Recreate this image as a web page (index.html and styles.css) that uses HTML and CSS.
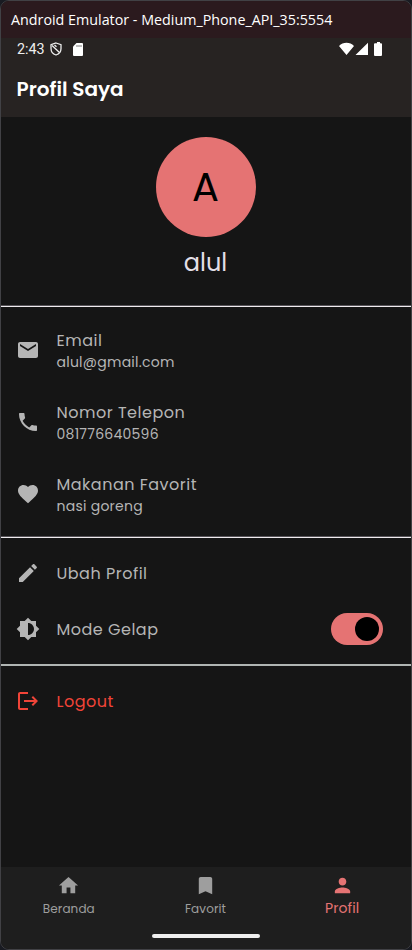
FILE: index.html
```html
<!DOCTYPE html>
<html lang="id">
<head>
<meta charset="utf-8">
<title>Profil Saya</title>
<link rel="stylesheet" href="styles.css">
</head>
<body>
<div class="window">
  <div class="titlebar">Android Emulator - Medium_Phone_API_35:5554</div>
  <header class="appbar">
    <div class="status">
      <span class="clock">2:43</span>
      <svg class="shield" viewBox="0 0 12 14"><path d="M6 1 11 2.600V6.500C11 9.500 9 12 6 13 3 12 1 9.500 1 6.500V2.600Z" fill="none" stroke="#eee" stroke-width="1.300"/><path d="M2 3.500 9.500 10.500M4.500 3 6.500 4.800" fill="none" stroke="#eee" stroke-width="1.300"/></svg>
      <svg class="sd" viewBox="0 0 10 13"><path d="M3.500 0H9a1 1 0 0 1 1 1V12a1 1 0 0 1-1 1H1a1 1 0 0 1-1-1V3.500Z" fill="#fff"/><path d="M4 2V4M6 2V4M8 2V4" stroke="#272322" stroke-width=".6"/></svg>
      <svg class="signals" viewBox="0 0 44 14"><path d="M0 4C4-.2 11-.2 15 4L7.500 13ZM29 .8V13H16.500ZM37 1.200H38V0H41V1.200H42a1 1 0 0 1 1 1V13a1 1 0 0 1-1 1H36a1 1 0 0 1-1-1V2.200a1 1 0 0 1 1-1Z" fill="#fff"/></svg>
    </div>
    <h1>Profil Saya</h1>
  </header>
  <main>
    <section class="hero">
      <div class="avatar">A</div>
      <div class="name">alul</div>
    </section>
    <section class="group details">
      <div class="row tall"><svg class="icon" viewBox="0 0 24 24"><path d="M20 4H4c-1.100 0-2 .9-2 2v12c0 1.100.9 2 2 2h16c1.100 0 2-.9 2-2V6c0-1.100-.9-2-2-2zm0 4-8 5-8-5V6l8 5 8-5v2z"/></svg><div class="text"><span class="label">Email</span><span class="value">alul@gmail.com</span></div></div>
      <div class="row tall"><svg class="icon" viewBox="0 0 24 24"><path d="M6.620 10.790c1.440 2.830 3.760 5.140 6.590 6.590l2.200-2.200c.27-.27.67-.36 1.020-.24 1.120.37 2.330.57 3.570.57.55 0 1 .45 1 1V20c0 .55-.45 1-1 1-9.390 0-17-7.610-17-17 0-.55.45-1 1-1h3.500c.55 0 1 .45 1 1 0 1.250.2 2.450.57 3.570.11.35.03.74-.25 1.020l-2.200 2.200z"/></svg><div class="text"><span class="label">Nomor Telepon</span><span class="value">081776640596</span></div></div>
      <div class="row tall"><svg class="icon" viewBox="0 0 24 24"><path d="m12 21.350-1.450-1.320C5.400 15.360 2 12.280 2 8.500 2 5.420 4.420 3 7.500 3c1.740 0 3.410.81 4.500 2.090C13.090 3.810 14.760 3 16.500 3 19.580 3 22 5.420 22 8.500c0 3.780-3.400 6.860-8.550 11.540L12 21.350z"/></svg><div class="text"><span class="label">Makanan Favorit</span><span class="value">nasi goreng</span></div></div>
    </section>
    <section class="group settings">
      <div class="row"><svg class="icon" viewBox="0 0 24 24"><path d="M3 17.250V21h3.750L17.810 9.940l-3.750-3.750L3 17.250zM20.710 7.040c.39-.39.39-1.020 0-1.410l-2.340-2.340c-.39-.39-1.020-.39-1.410 0l-1.830 1.830 3.750 3.750 1.830-1.830z"/></svg><span class="label">Ubah Profil</span></div>
      <div class="row"><svg class="icon" viewBox="0 0 24 24"><path d="M20 8.690V4h-4.690L12 .69 8.690 4H4v4.690L.69 12 4 15.310V20h4.690L12 23.310 15.310 20H20v-4.690L23.310 12 20 8.690zM12 18V6c3.310 0 6 2.690 6 6s-2.690 6-6 6z" fill-rule="evenodd"/></svg><span class="label">Mode Gelap</span><span class="switch"><span class="thumb"></span></span></div>
    </section>
    <section class="group account">
      <div class="row danger"><svg class="icon" viewBox="0 0 24 24"><path d="m17 7-1.410 1.410L18.170 11H8v2h10.170l-2.580 2.580L17 17l5-5zM4 5h8V3H4c-1.100 0-2 .9-2 2v14c0 1.100.9 2 2 2h8v-2H4V5z"/></svg><span class="label">Logout</span></div>
    </section>
  </main>
  <nav>
    <div class="tabs">
      <div class="tab"><svg viewBox="0 0 24 24"><path d="M10 20v-6h4v6h5v-8h3L12 3 2 12h3v8z"/></svg><span>Beranda</span></div>
      <div class="tab"><svg viewBox="0 0 24 24"><path d="M17 3H7c-1.100 0-2 .9-2 2v16l7-3 7 3V5c0-1.100-.9-2-2-2z"/></svg><span>Favorit</span></div>
      <div class="tab active"><svg viewBox="0 0 24 24"><path d="M12 12c2.210 0 4-1.790 4-4s-1.790-4-4-4-4 1.790-4 4 1.790 4 4 4zm0 2c-2.670 0-8 1.340-8 4v2h16v-2c0-2.660-5.330-4-8-4z"/></svg><span>Profil</span></div>
    </div>
    <div class="home-bar"></div>
  </nav>
</div>
</body>
</html>
```
FILE: styles.css
```css
* { box-sizing: border-box; }
body { margin: 0; background: #191b22; font-family: Poppins, Inter, sans-serif; font-feature-settings: "cv11"; }
.window { width: 412px; height: 950px; display: flex; flex-direction: column; border: 1px solid #414145; border-radius: 9px; overflow: hidden; background: #151515; }
.titlebar { height: 37px; flex: none; padding-left: 10px; background: #2b1a1e; color: #fff; font: 14.3px/37px "Open Sans", sans-serif; white-space: nowrap; }
.appbar { height: 79px; flex: none; background: #272322; color: #fff; }
.status { display: flex; align-items: center; height: 22px; padding: 0 28px 0 16px; }
.clock { font: 14.3px/23px Roboto, sans-serif; width: 32.5px; color: #eee; }
.shield { width: 12px; height: 14px; }
.sd { width: 10px; height: 13px; margin-left: 11px; }
.signals { width: 44px; height: 14px; margin-left: auto; }
h1 { margin: 14px 0 0 15.5px; font-size: 20px; line-height: 30px; font-weight: 600; }
main { flex: 1; }
.hero { height: 188px; padding: 19.7px 1px 0 0; text-align: center; }
.avatar { width: 100px; height: 100px; margin: 0 auto; border-radius: 50%; background: #e57373; color: #000; font-size: 40px; line-height: 101px; }
.name { margin-top: 8px; font-size: 24px; line-height: 36px; color: #e3dfe6; }
.group { border-top: 1px solid #555257; color: #b5b5b5; }
.group::before { content: ""; display: block; height: 1px; margin-bottom: 7px; background: #efecef; }
.details { height: 231px; }
.settings { height: 128px; }
.account { border-top-color: #b0b5b3; }
.account::before { background: #b0b5b3; }
.row { display: flex; align-items: center; height: 56px; padding: 0 28px 0 15px; }
.row.tall { height: 72px; }
.icon { width: 24px; height: 24px; margin-right: 16.500px; fill: currentColor; flex: none; }
.text { display: flex; flex-direction: column; }
.label { font-size: 16px; line-height: 24px; letter-spacing: .5px; white-space: nowrap; }
.row > .label { margin-top: 2px; }
.text .label { margin-bottom: -1px; }
.value { font-size: 14px; line-height: 20px; letter-spacing: .25px; white-space: nowrap; }
.danger { color: #f04438; }
.switch { width: 52px; height: 32px; margin-left: auto; padding: 4px; border-radius: 16px; background: #e57373; display: flex; justify-content: flex-end; }
.thumb { width: 24px; height: 24px; border-radius: 50%; background: #000; }
nav { height: 82px; flex: none; background: #1e1e1e; color: #9e9e9e; }
.tabs { display: flex; height: 56px; }
.tab { flex: 1; display: flex; flex-direction: column; align-items: center; padding: 7px 1px 0 0; font-size: 12px; line-height: 24px; letter-spacing: .1px; }
.tab svg { width: 23px; height: 23px; fill: currentColor; }
.tab.active { color: #e57373; font-size: 14px; line-height: 22px; }
.home-bar { width: 108px; height: 4px; border-radius: 2px; background: #eee; margin: 11px auto 0; }
```
